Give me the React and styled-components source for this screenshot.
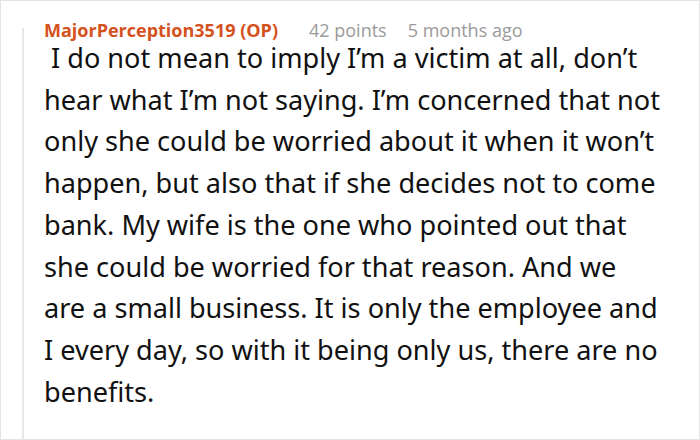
import React from "react";
import styled, { createGlobalStyle } from "styled-components";

const GlobalStyle = createGlobalStyle`
  html, body {
    margin: 0;
    padding: 0;
    background: #ffffff;
  }
  * {
    box-sizing: border-box;
  }
`;

const Frame = styled.div`
  width: 700px;
  height: 440px;
  border: 1px solid #e4e4e4;
  background: #ffffff;
  padding: 0 12px 0 21px;
  overflow: hidden;
  font-family: "Open Sans", "Noto Sans", sans-serif;
`;

const Comment = styled.div`
  position: relative;
  padding: 22px 0 0 22px;
  height: 100%;
  &::before {
    content: "";
    position: absolute;
    left: 0;
    top: 27px;
    bottom: 0;
    width: 2px;
    background: #e8e8e8;
  }
`;

const Header = styled.div`
  display: flex;
  align-items: baseline;
  gap: 21px;
  font-size: 18px;
  line-height: 14px;
  height: 14px;
`;

const Author = styled.span`
  color: #d5511d;
  font-weight: 700;
`;

const Meta = styled.span`
  color: #9a9a9a;
  margin-left: ${(p) => (p.$first ? "10px" : "0")};
`;

const Body = styled.p`
  margin: 0;
  font-family: "Noto Sans", "Open Sans", sans-serif;
  font-size: 27.1px;
  line-height: 41.7px;
  color: #111111;
`;

const Line = styled.span`
  display: block;
  white-space: pre;
`;

const lines = [
  " I do not mean to imply I’m a victim at all, don’t",
  "hear what I’m not saying. I’m concerned that not",
  "only she could be worried about it when it won’t",
  "happen, but also that if she decides not to come",
  "bank. My wife is the one who pointed out that",
  "she could be worried for that reason. And we",
  "are a small business. It is only the employee and",
  "I every day, so with it being only us, there are no",
  "benefits.",
];

export default function App() {
  return (
    <>
      <GlobalStyle />
      <Frame>
        <Comment>
          <Header>
            <Author>MajorPerception3519 (OP)</Author>
            <Meta $first>42 points</Meta>
            <Meta>5 months ago</Meta>
          </Header>
          <Body>
            {lines.map((l, i) => (
              <Line key={i}>{l}</Line>
            ))}
          </Body>
        </Comment>
      </Frame>
    </>
  );
}
